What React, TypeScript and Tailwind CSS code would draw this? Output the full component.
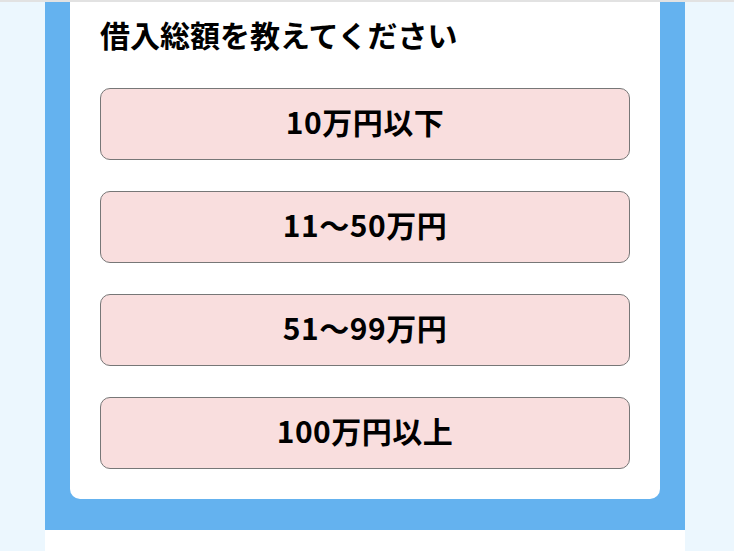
import React from "react";

const options = ["10万円以下", "11～50万円", "51～99万円", "100万円以上"];

const App: React.FC = () => {
  return (
    <div
      className="min-h-screen bg-[#ecf7fe]"
      style={{ fontFamily: '"Noto Sans CJK JP", "Noto Sans", sans-serif' }}
    >
      <div className="h-[2px] bg-[#e2e2e2]" />
      <div className="mx-[45px] w-[640px]">
        <div className="bg-[#64b2ef] px-[25px] pb-[31px]">
          <div className="bg-white rounded-b-[10px] px-[30px] pt-[10px] pb-[30px]">
            <h2 className="text-[30px] font-bold leading-[44px] text-black">
              借入総額を教えてください
            </h2>
            <div className="mt-[32px] flex flex-col gap-[31px]">
              {options.map((label) => (
                <button
                  key={label}
                  className="h-[72px] w-full rounded-[10px] border border-[#777] bg-[#f9dede] pb-[6px] text-[30px] font-bold tracking-[0.5px] text-black"
                >
                  {label}
                </button>
              ))}
            </div>
          </div>
        </div>
        <div className="h-[40px] bg-white" />
      </div>
    </div>
  );
};

export default App;
